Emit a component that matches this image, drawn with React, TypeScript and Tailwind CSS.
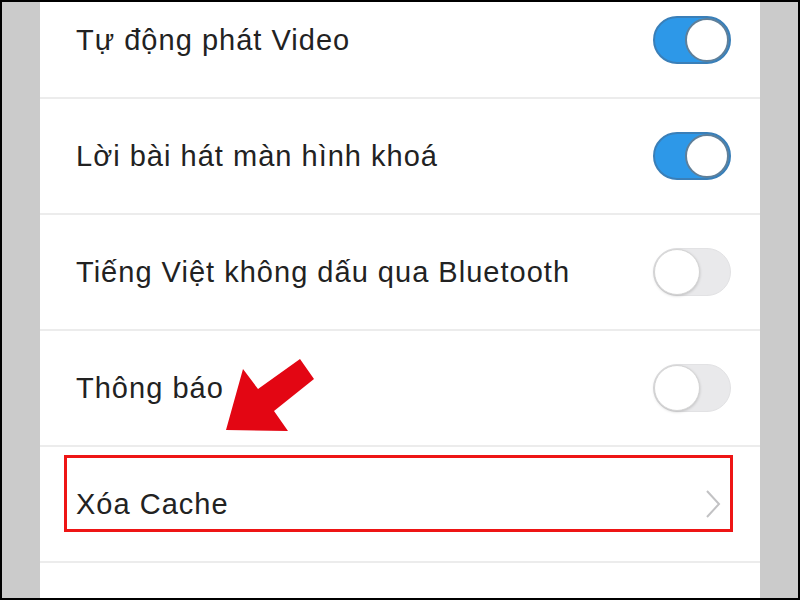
import React from "react";

function Toggle({ on }: { on: boolean }) {
  return on ? (
    <div className="relative w-[78px] h-[48px] rounded-full bg-[#2d98e8] border-[2px] border-[#3a7fb8]">
      <div className="absolute right-0 top-0 w-[44px] h-[44px] rounded-full bg-white border-[2px] border-[#5f7f99]" />
    </div>
  ) : (
    <div className="relative w-[78px] h-[48px] rounded-full bg-[#e9e9eb] border-[1px] border-[#e2e2e4]">
      <div className="absolute left-0 top-0 w-[46px] h-[46px] rounded-full bg-white border-[1px] border-[#d4d4d4] shadow-[0_1px_3px_rgba(0,0,0,0.18)]" />
    </div>
  );
}

function Row({ label, right }: { label: string; right?: React.ReactNode }) {
  return (
    <div className="h-[116px] shrink-0 flex items-center justify-between pl-[36px] pr-[29px] border-b-[2px] border-[#ececec]">
      <span className="text-[29px] tracking-[0.035em] text-[#222] leading-none">{label}</span>
      {right}
    </div>
  );
}

export default function App() {
  return (
    <div
      className="w-[800px] h-[600px] bg-black p-[2px] overflow-hidden"
      style={{ fontFamily: '"Liberation Sans", Arial, sans-serif' }}
    >
      <div className="flex w-full h-full bg-[#cbcbcb]">
        <div className="w-[38px] shrink-0" />
        <div className="relative w-[720px] h-full bg-white overflow-hidden">
          <div className="flex flex-col mt-[-19px]">
            <Row label="Tự động phát Video" right={<Toggle on />} />
            <Row label="Lời bài hát màn hình khoá" right={<Toggle on />} />
            <Row label="Tiếng Việt không dấu qua Bluetooth" right={<Toggle on={false} />} />
            <Row label="Thông báo" right={<Toggle on={false} />} />
            <Row
              label="Xóa Cache"
              right={
                <svg width="20" height="30" viewBox="0 0 20 30" className="mr-[8px]">
                  <polyline points="4,2 16,15 4,28" fill="none" stroke="#c2c2c4" strokeWidth="2" />
                </svg>
              }
            />
            <div className="h-[116px] shrink-0" />
          </div>
          <div className="absolute left-[24px] top-[453px] w-[669px] h-[77px] border-[3px] border-[#ee1515]" />
          <svg className="absolute left-0 top-0" width="720" height="600" viewBox="40 2 720 600">
            <polygon
              points="300,359 314,379 274,411 288,431 226,430 243,369 258,389"
              fill="#e30613"
            />
          </svg>
        </div>
        <div className="w-[38px] shrink-0" />
      </div>
    </div>
  );
}
